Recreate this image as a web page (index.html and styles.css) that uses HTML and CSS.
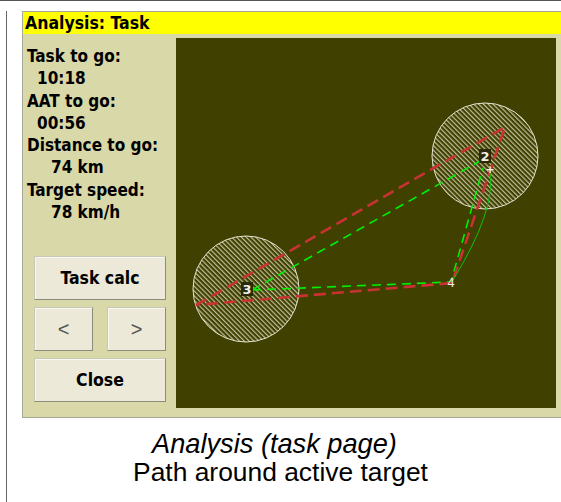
FILE: index.html
```html
<!DOCTYPE html>
<html>
<head>
<meta charset="utf-8">
<link rel="stylesheet" href="styles.css">
</head>
<body>
<div class="topline"></div>
<div class="frame">
  <div class="dialog">
    <div class="titlebar">Analysis: Task</div>
    <div class="content">
      <div class="side">
        <div class="info">
          <div class="label">Task to go:</div>
          <div class="value short">10:18</div>
          <div class="label">AAT to go:</div>
          <div class="value short">00:56</div>
          <div class="label">Distance to go:</div>
          <div class="value long">74 km</div>
          <div class="label">Target speed:</div>
          <div class="value long">78 km/h</div>
        </div>
        <div class="buttons">
          <button class="btn">Task calc</button>
          <div class="btnrow">
            <button class="btn arrow">&lt;</button>
            <button class="btn arrow">&gt;</button>
          </div>
          <button class="btn">Close</button>
        </div>
      </div>
      <div class="map">
        <svg width="380" height="370" viewBox="0 0 380 370">
          <defs>
            <pattern id="hatch" width="3.4" height="3.4" patternUnits="userSpaceOnUse" patternTransform="rotate(-45)">
              <line x1="0.6" y1="0" x2="0.6" y2="3.4" stroke="#c8c8a8" stroke-width="1.1"/>
            </pattern>
          </defs>
          <circle cx="309" cy="118" r="53" fill="url(#hatch)" stroke="#e4e4d4" stroke-width="1"/>
          <circle cx="70" cy="251" r="53" fill="url(#hatch)" stroke="#e4e4d4" stroke-width="1"/>
          <g fill="none" stroke="#00f000" stroke-width="1.6" stroke-dasharray="9 6">
            <path d="M76 252 L304 123"/>
            <path d="M76 252 L275 244 L307 130"/>
          </g>
          <g fill="none" stroke="#c83232" stroke-width="2.6" stroke-dasharray="12 6">
            <path d="M20 267 L329 89 L276 245 Z"/>
          </g>
          <path d="M314 135 Q320 172 277 242" fill="none" stroke="#10c010" stroke-width="1"/>
          <rect x="303" y="111" width="12" height="14" fill="#2a2a08"/>
          <text x="309" y="123" class="mk">2</text>
          <text x="314" y="135" class="plus">+</text>
          <rect x="65" y="244" width="12" height="14" fill="#2a2a08"/>
          <text x="71" y="256" class="mk">3</text>
          <text x="275" y="249" class="small">4</text>
        </svg>
      </div>
    </div>
  </div>
  <div class="caption">
    <div class="cap1">Analysis (task page)</div>
    <div class="cap2">Path around active target</div>
  </div>
</div>
</body>
</html>
```
FILE: styles.css
```css
html, body {
  margin: 0;
  padding: 0;
  background: #ffffff;
  overflow: hidden;
}
body {
  width: 561px;
  height: 502px;
}
.topline {
  height: 1px;
  background: #555555;
}
.frame {
  margin-left: 6px;
  margin-top: 10px;
  border-left: 1px solid #666666;
  padding-left: 15px;
  height: 491px;
}
.dialog {
  border: 1px solid #a8a898;
  border-right: none;
  background: #d8d8a8;
  height: 405px;
  display: flex;
  flex-direction: column;
}
.titlebar {
  height: 22px;
  line-height: 22px;
  background: #ffff00;
  padding-left: 2px;
  font-family: "DejaVu Sans Condensed", "DejaVu Sans", sans-serif;
  font-stretch: condensed;
  font-weight: bold;
  font-size: 17.5px;
  color: #000;
}
.content {
  display: flex;
  flex: 1;
}
.side {
  width: 153px;
  display: flex;
  flex-direction: column;
}
.info {
  padding: 11px 0 0 4px;
  font-family: "DejaVu Sans Condensed", "DejaVu Sans", sans-serif;
  font-stretch: condensed;
  font-weight: bold;
  font-size: 17px;
  line-height: 22.3px;
  color: #000;
}
.value.short { padding-left: 10px; }
.value.long { padding-left: 24px; }
.buttons {
  margin-top: 33px;
  padding-left: 11px;
  display: flex;
  flex-direction: column;
  gap: 7px;
}
.btnrow {
  display: flex;
  gap: 14px;
}
.btn {
  width: 132px;
  height: 44px;
  margin: 0;
  padding: 0;
  background: #ece9d8;
  border: 1px solid;
  border-color: #c8c8b8 #8c8c7c #8c8c7c #c8c8b8;
  box-shadow: inset 1px 1px 0 #f8f8f0;
  font-family: "DejaVu Sans Condensed", "DejaVu Sans", sans-serif;
  font-stretch: condensed;
  font-weight: bold;
  font-size: 17.5px;
  color: #000;
}
.btn.arrow {
  width: 59px;
  font-family: "Liberation Sans", sans-serif;
  font-stretch: normal;
  font-weight: normal;
  font-size: 20px;
  color: #555;
}
.map {
  margin-top: 4px;
  width: 380px;
  height: 370px;
  background: #404000;
}
.map svg { display: block; }
.mk {
  font-family: "DejaVu Sans", sans-serif;
  font-weight: bold;
  font-size: 13px;
  fill: #f0f0e8;
  text-anchor: middle;
}
.plus {
  font-family: "DejaVu Sans", sans-serif;
  font-weight: bold;
  font-size: 11px;
  fill: #f0f0e8;
  text-anchor: middle;
}
.small {
  font-family: "DejaVu Sans", sans-serif;
  font-size: 12px;
  fill: #e8e8e8;
  text-anchor: middle;
}
.caption {
  margin-top: 12px;
  padding-right: 22px;
  text-align: center;
  font-family: "Liberation Sans", Arial, sans-serif;
  font-size: 26.4px;
  line-height: 28px;
  color: #000;
}
.cap1 {
  font-style: italic;
  font-size: 27.2px;
  padding-right: 12px;
}
```
